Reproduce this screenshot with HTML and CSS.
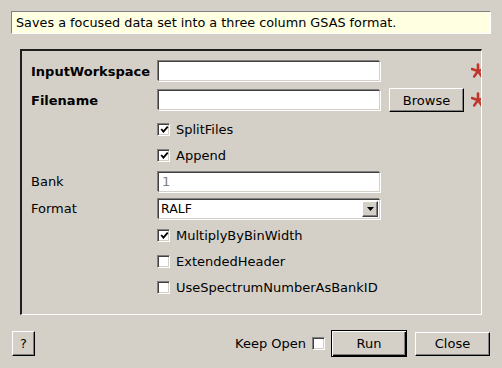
FILE: index.html
```html
<!DOCTYPE html>
<html lang="en">
  <head>
    <meta charset="utf-8" />
    <title>SaveFocusedXYE</title>
    <link rel="stylesheet" href="styles.css">
  </head>
  <body>
    <div class="dialog">
      <div class="desc">Saves a focused data set into a three column GSAS format.</div>

      <div class="frame">
        <div class="form">
          <div class="label bold">InputWorkspace</div>
          <div class="field"><div class="edit"></div></div>
          <div class="extra"></div>
          <div class="mark">
            <svg width="16" height="16" viewBox="0 0 16 16"><g stroke="#c0362c" stroke-width="2.6" stroke-linecap="round"><line x1="7" y1="8" x2="7" y2="1.5"/><line x1="7" y1="8" x2="0.8" y2="6"/><line x1="7" y1="8" x2="3.2" y2="13.4"/><line x1="7" y1="8" x2="10.8" y2="13.4"/><line x1="7" y1="8" x2="13.2" y2="6"/></g></svg>
          </div>

          <div class="label bold">Filename</div>
          <div class="field"><div class="edit"></div></div>
          <div class="extra"><button class="btn browse">Browse</button></div>
          <div class="mark">
            <svg width="16" height="16" viewBox="0 0 16 16"><g stroke="#c0362c" stroke-width="2.6" stroke-linecap="round"><line x1="7" y1="8" x2="7" y2="1.5"/><line x1="7" y1="8" x2="0.8" y2="6"/><line x1="7" y1="8" x2="3.2" y2="13.4"/><line x1="7" y1="8" x2="10.8" y2="13.4"/><line x1="7" y1="8" x2="13.2" y2="6"/></g></svg>
          </div>

          <div class="check-row">
            <span class="box checked"><svg width="9" height="9" viewBox="0 0 9 9"><polyline points="1.2,4 3.4,6.6 7.8,1.6" fill="none" stroke="#000" stroke-width="1.8"/></svg></span>
            <span>SplitFiles</span>
          </div>

          <div class="check-row">
            <span class="box checked"><svg width="9" height="9" viewBox="0 0 9 9"><polyline points="1.2,4 3.4,6.6 7.8,1.6" fill="none" stroke="#000" stroke-width="1.8"/></svg></span>
            <span>Append</span>
          </div>

          <div class="label">Bank</div>
          <div class="field"><div class="edit hint">1</div></div>
          <div class="extra"></div>
          <div class="mark"></div>

          <div class="label">Format</div>
          <div class="field">
            <div class="combo">
              <span class="combo-text">RALF</span>
              <span class="combo-btn"><svg width="7" height="4" viewBox="0 0 7 4"><polygon points="0,0 7,0 3.5,4" fill="#000"/></svg></span>
            </div>
          </div>
          <div class="extra"></div>
          <div class="mark"></div>

          <div class="check-row">
            <span class="box checked"><svg width="9" height="9" viewBox="0 0 9 9"><polyline points="1.2,4 3.4,6.6 7.8,1.6" fill="none" stroke="#000" stroke-width="1.8"/></svg></span>
            <span>MultiplyByBinWidth</span>
          </div>

          <div class="check-row">
            <span class="box"></span>
            <span>ExtendedHeader</span>
          </div>

          <div class="check-row">
            <span class="box"></span>
            <span>UseSpectrumNumberAsBankID</span>
          </div>
        </div>
      </div>

      <div class="footer">
        <button class="btn help">?</button>
        <div class="spacer"></div>
        <span class="keep">Keep Open</span>
        <span class="box"></span>
        <button class="btn default run">Run</button>
        <button class="btn close">Close</button>
      </div>
    </div>
  </body>
</html>
```

FILE: styles.css
```css
html {
  background: #d4d0c8;
}
body {
  margin: 0;
  font-family: "DejaVu Sans", sans-serif;
  font-size: 13px;
  color: #000;
}

.dialog {
  padding: 11px 11px 0 11px;
}

/* description strip */
.desc {
  height: 21px;
  line-height: 21px;
  padding-left: 4px;
  font-size: 12.8px;
  background: #ffffe1;
  border: 1px solid;
  border-color: #808080 #fff #fff #808080;
}

/* property frame */
.frame {
  margin: 15px 0 0 9px;
  width: 450px;
  border-style: solid;
  border-width: 2px 1px 1px 2px;
  border-color: #1e1e1e #fff #fff #1e1e1e;
  overflow: hidden;
  padding: 7px 0 14px 9px;
}

.form {
  display: grid;
  grid-template-columns: 126px 224px 83px auto;
  grid-template-rows: 26px 32px 26px 26px 27px 27px 26px 26px 26px;
  align-items: center;
}

.bold {
  font-weight: bold;
}

.edit {
  box-sizing: border-box;
  height: 20px;
  line-height: 18px;
  padding-left: 3px;
  background: #fff;
  border: 1px solid;
  border-color: #404040 #d4d0c8 #d4d0c8 #404040;
  box-shadow: -1px -1px 0 #808080, 1px 1px 0 #fff;
  margin: 0 1px;
  width: 222px;
}
.hint {
  color: #808080;
}

.combo {
  box-sizing: border-box;
  width: 222px;
  height: 20px;
  margin: 0 1px;
  display: flex;
  align-items: center;
  justify-content: space-between;
  background: #fff;
  border: 1px solid;
  border-color: #404040 #d4d0c8 #d4d0c8 #404040;
  box-shadow: -1px -1px 0 #808080, 1px 1px 0 #fff;
  padding: 0 0 0 2px;
}
.combo-text {
  font-size: 12.5px;
}
.combo-btn {
  box-sizing: border-box;
  width: 16px;
  height: 16px;
  display: flex;
  align-items: center;
  justify-content: center;
  background: #d4d0c8;
  border: 1px solid;
  border-color: #fff #404040 #404040 #fff;
  box-shadow: inset -1px -1px 0 #808080;
  margin-right: 1px;
}

.extra {
  padding-left: 8px;
  display: flex;
}
.mark {
  padding-left: 7px;
  display: flex;
}

.check-row {
  grid-column: 2 / span 3;
  display: flex;
  align-items: center;
  gap: 6px;
}

.box {
  box-sizing: border-box;
  width: 13px;
  height: 13px;
  background: #fff;
  border-style: solid;
  border-width: 1px;
  border-color: #808080 #fff #fff #808080;
  box-shadow: inset 1px 1px 0 #404040, inset -1px -1px 0 #d4d0c8;
  display: flex;
  align-items: center;
  justify-content: center;
  flex: none;
}
.box svg {
  margin: 1px 0 0 1px;
}

/* buttons */
.btn {
  box-sizing: border-box;
  font-family: "DejaVu Sans", sans-serif;
  font-size: 13px;
  color: #000;
  background: #d4d0c8;
  border: 1px solid;
  border-color: #fff #000 #000 #fff;
  box-shadow: inset -1px -1px 0 #808080;
  padding: 0;
  height: 24px;
}
.browse {
  width: 75px;
}

.footer {
  margin: 15px 1px 0 1px;
  height: 27px;
  display: flex;
  align-items: center;
}
.spacer {
  flex: 1;
}
.help {
  width: 23px;
  height: 25px;
}
.keep {
  margin-right: 6px;
}
.run {
  margin-left: 6px;
  width: 76px;
  height: 27px;
  border-color: #000;
  box-shadow: inset 1px 1px 0 #fff, inset -1px -1px 0 #000, inset -2px -2px 0 #808080;
}
.close {
  margin-left: 8px;
  width: 75px;
}
```
